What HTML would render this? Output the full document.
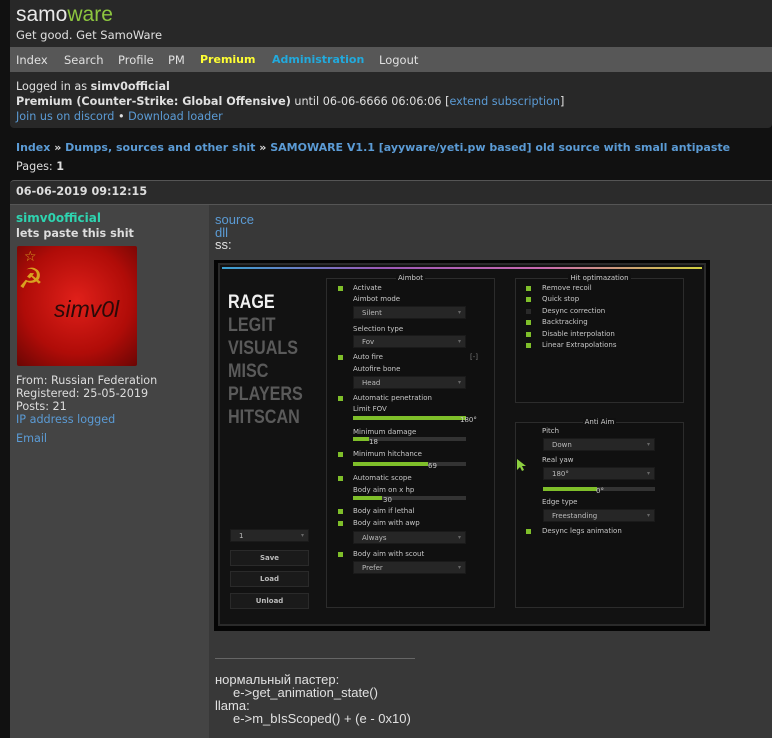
<!DOCTYPE html>
<html><head><meta charset="utf-8"><style>
*{margin:0;padding:0;box-sizing:border-box}
body{width:772px;height:738px;overflow:hidden;background:#111;font-family:"DejaVu Sans","Liberation Sans",sans-serif;font-size:11.2px;color:#ddd;position:relative}
.a{position:absolute;white-space:nowrap}
a,.l{color:#5b9bd5;text-decoration:none}
b{font-weight:bold}
.s{font-family:"Liberation Sans",sans-serif;font-size:13px;color:#e0e0e0}
.g{font-family:"DejaVu Sans",sans-serif;font-size:7px;color:#c8c8c8;position:absolute;white-space:nowrap}
.cb{position:absolute;width:5px;height:5px;background:#7fbf2a}
.dd{position:absolute;height:13px;background:#262626;border:1px solid #1a1a1a;font-family:"DejaVu Sans",sans-serif;font-size:7px;color:#bbb;padding:2px 0 0 8px}
.dd:after{content:"▾";position:absolute;right:4px;top:2px;color:#666;font-size:6px}
.sl{position:absolute;height:4px;background:#333}
.sl i{display:block;height:4px;background:#7fbf2a}
.gb{position:absolute;border:1px solid #2c2c2c;background:#101010}
.gt{position:absolute;top:-5px;left:0;right:0;text-align:center;font-size:7px;color:#ccc;font-family:"DejaVu Sans",sans-serif}
.gt span{background:#101010;padding:0 2px}
.tab{position:absolute;left:228px;font-family:"Liberation Sans Narrow","Liberation Sans",sans-serif;font-weight:bold;font-size:19px;color:#5a5a5a;transform:scaleX(.85);transform-origin:left}
.btn{position:absolute;left:230px;width:79px;height:16px;background:#1a1a1a;border:1px solid #2a2a2a;font-size:7px;font-weight:bold;color:#bbb;text-align:center;line-height:14px;font-family:"DejaVu Sans",sans-serif}
.n{position:absolute;top:53px;font-size:11.5px;color:#e0e0e0;white-space:nowrap}
</style></head><body>
<div class="a" style="left:10px;top:0;width:762px;height:128px;background:#282828;border-radius:0 0 4px 4px"></div>
<div class="a" style="left:16px;top:3px;font-size:21px;font-family:'Liberation Sans',sans-serif;color:#e8e8e8">samo<span style="color:#8dc63f">ware</span></div>
<div class="a" style="left:16px;top:28px;font-size:11.5px;color:#e0e0e0">Get good. Get SamoWare</div>
<div class="a" style="left:10px;top:47px;width:762px;height:25px;background:#575757"></div>
<div class="n" style="left:16px">Index</div>
<div class="n" style="left:64px">Search</div>
<div class="n" style="left:118px">Profile</div>
<div class="n" style="left:168px">PM</div>
<div class="n" style="left:200px;color:#ffff33;font-weight:bold;font-size:11px">Premium</div>
<div class="n" style="left:272px;color:#22aadd;font-weight:bold;font-size:11px">Administration</div>
<div class="n" style="left:379px">Logout</div>
<div class="a" style="left:16px;top:79px;font-size:11.2px;line-height:15px;color:#e0e0e0">Logged in as <b>simv0official</b><br><b>Premium (Counter-Strike: Global Offensive)</b> until 06-06-6666 06:06:06 [<a>extend subscription</a>]<br><a>Join us on discord</a> • <a>Download loader</a></div>
<div class="a" style="left:16px;top:141px;font-size:11px;font-weight:bold;color:#5b9bd5">Index <span style="color:#ddd">»</span> Dumps, sources and other shit <span style="color:#ddd">»</span> SAMOWARE V1.1 [ayyware/yeti.pw based] old source with small antipaste</div>
<div class="a" style="left:16px;top:160px;font-size:11.2px">Pages: <b>1</b></div>
<div class="a" style="left:10px;top:180px;width:762px;height:25px;background:#2b2b2b;border-top:1px solid #555;border-bottom:1px solid #555;border-radius:4px 0 0 0"></div>
<div class="a" style="left:16px;top:185px;font-size:11.2px;font-weight:bold">06-06-2019 09:12:15</div>
<div class="a" style="left:10px;top:205px;width:199px;height:533px;background:#444"></div>
<div class="a" style="left:209px;top:205px;width:563px;height:533px;background:#383838"></div>
<div class="a" style="left:16px;top:211px;font-size:11.2px;line-height:15px"><b style="color:#2ed4b0;font-size:12px">simv0official</b><br><b style="color:#ddd">lets paste this shit</b></div>
<div class="a" style="left:17px;top:246px;width:120px;height:120px;background:radial-gradient(circle at 50% 45%,#e0201a,#b00c08 60%,#6a0604);border-radius:2px"></div>
<div class="a" style="left:24px;top:249px;color:#d9a020;font-size:14px">☆</div>
<div class="a" style="left:18px;top:262px;color:#d9a020;font-size:28px">☭</div>
<div class="a" style="left:54px;top:296px;color:#2a0a08;font-size:23px;font-style:italic;font-family:'Liberation Sans',sans-serif">simv0l</div>
<div class="a" style="left:16px;top:374px;font-size:11.2px;line-height:13px;color:#ddd">From: Russian Federation<br>Registered: 25-05-2019<br>Posts: 21<br><a>IP address logged</a></div>
<div class="a" style="left:16px;top:432px;font-size:11.2px"><a>Email</a></div>
<div class="a s" style="left:215px;top:214px;line-height:12.5px"><a>source</a><br><a>dll</a><br>ss:</div>
<!-- screenshot -->
<div class="a" style="left:214px;top:260px;width:496px;height:371px;background:#050505"></div>
<div class="a" style="left:218px;top:263px;width:488px;height:363px;background:#121212;border:2px solid #2a2a2a"></div>
<div class="a" style="left:222px;top:267px;width:480px;height:2px;background:linear-gradient(90deg,#3aa0d0,#9b59b6,#c86ab0,#d0d040)"></div>
<div class="tab" style="top:292px;color:#f0f0f0">RAGE</div>
<div class="tab" style="top:315px">LEGIT</div>
<div class="tab" style="top:338px">VISUALS</div>
<div class="tab" style="top:361px">MISC</div>
<div class="tab" style="top:384px">PLAYERS</div>
<div class="tab" style="top:407px">HITSCAN</div>
<div class="dd" style="left:230px;top:529px;width:79px">1</div>
<div class="btn" style="top:550px">Save</div>
<div class="btn" style="top:571px">Load</div>
<div class="btn" style="top:593px">Unload</div>
<div class="gb" style="left:326px;top:278px;width:169px;height:330px"><div class="gt"><span>Aimbot</span></div></div>
<div class="cb" style="left:338px;top:286px"></div><div class="g" style="left:353px;top:284px">Activate</div>
<div class="g" style="left:353px;top:295px">Aimbot mode</div>
<div class="dd" style="left:353px;top:306px;width:113px">Silent</div>
<div class="g" style="left:353px;top:325px">Selection type</div>
<div class="dd" style="left:353px;top:335px;width:113px">Fov</div>
<div class="cb" style="left:338px;top:355px"></div><div class="g" style="left:353px;top:353px">Auto fire</div><div class="g" style="left:470px;top:353px;color:#777">[-]</div>
<div class="g" style="left:353px;top:365px">Autofire bone</div>
<div class="dd" style="left:353px;top:376px;width:113px">Head</div>
<div class="cb" style="left:338px;top:396px"></div><div class="g" style="left:353px;top:394px">Automatic penetration</div>
<div class="g" style="left:353px;top:405px">Limit FOV</div>
<div class="sl" style="left:353px;top:416px;width:113px"><i style="width:113px"></i></div><div class="g" style="left:460px;top:416px">180°</div>
<div class="g" style="left:353px;top:428px">Minimum damage</div>
<div class="sl" style="left:353px;top:437px;width:113px"><i style="width:16px"></i></div><div class="g" style="left:369px;top:438px">18</div>
<div class="cb" style="left:338px;top:452px"></div><div class="g" style="left:353px;top:450px">Minimum hitchance</div>
<div class="sl" style="left:353px;top:462px;width:113px"><i style="width:75px"></i></div><div class="g" style="left:428px;top:462px">69</div>
<div class="cb" style="left:338px;top:476px"></div><div class="g" style="left:353px;top:474px">Automatic scope</div>
<div class="g" style="left:353px;top:486px">Body aim on x hp</div>
<div class="sl" style="left:353px;top:496px;width:113px"><i style="width:29px"></i></div><div class="g" style="left:383px;top:496px">30</div>
<div class="cb" style="left:338px;top:509px"></div><div class="g" style="left:353px;top:507px">Body aim if lethal</div>
<div class="cb" style="left:338px;top:521px"></div><div class="g" style="left:353px;top:519px">Body aim with awp</div>
<div class="dd" style="left:353px;top:531px;width:113px">Always</div>
<div class="cb" style="left:338px;top:552px"></div><div class="g" style="left:353px;top:550px">Body aim with scout</div>
<div class="dd" style="left:353px;top:561px;width:113px">Prefer</div>
<div class="gb" style="left:515px;top:278px;width:169px;height:125px"><div class="gt"><span>Hit optimazation</span></div></div>
<div class="cb" style="left:526px;top:286px"></div><div class="g" style="left:542px;top:284px">Remove recoil</div>
<div class="cb" style="left:526px;top:297px"></div><div class="g" style="left:542px;top:295px">Quick stop</div>
<div class="cb" style="left:526px;top:309px;background:#2a2a2a"></div><div class="g" style="left:542px;top:307px">Desync correction</div>
<div class="cb" style="left:526px;top:320px"></div><div class="g" style="left:542px;top:318px">Backtracking</div>
<div class="cb" style="left:526px;top:332px"></div><div class="g" style="left:542px;top:330px">Disable interpolation</div>
<div class="cb" style="left:526px;top:343px"></div><div class="g" style="left:542px;top:341px">Linear Extrapolations</div>
<div class="gb" style="left:515px;top:422px;width:169px;height:186px"><div class="gt"><span>Anti Aim</span></div></div>
<div class="g" style="left:542px;top:427px">Pitch</div>
<div class="dd" style="left:543px;top:438px;width:112px">Down</div>
<div class="g" style="left:542px;top:456px">Real yaw</div>
<div class="dd" style="left:543px;top:467px;width:112px">180°</div>
<div class="sl" style="left:543px;top:487px;width:112px"><i style="width:54px"></i></div><div class="g" style="left:596px;top:487px">0°</div>
<div class="g" style="left:542px;top:498px">Edge type</div>
<div class="dd" style="left:543px;top:509px;width:112px">Freestanding</div>
<div class="cb" style="left:526px;top:529px"></div><div class="g" style="left:542px;top:527px">Desync legs animation</div>
<svg class="a" style="left:517px;top:459px" width="9" height="13" viewBox="0 0 9 13"><path d="M0 0L0 11L3 8L5 12L7 11L5 7L9 7Z" fill="#8dd040"/></svg>
<div class="a" style="left:215px;top:658px;width:200px;height:1px;background:#666"></div>
<div class="a s" style="left:215px;top:673px;line-height:13px">нормальный пастер:<br>&nbsp;&nbsp;&nbsp;&nbsp;&nbsp;e-&gt;get_animation_state()<br>llama:<br>&nbsp;&nbsp;&nbsp;&nbsp;&nbsp;e-&gt;m_bIsScoped() + (e - 0x10)</div>
</body></html>
